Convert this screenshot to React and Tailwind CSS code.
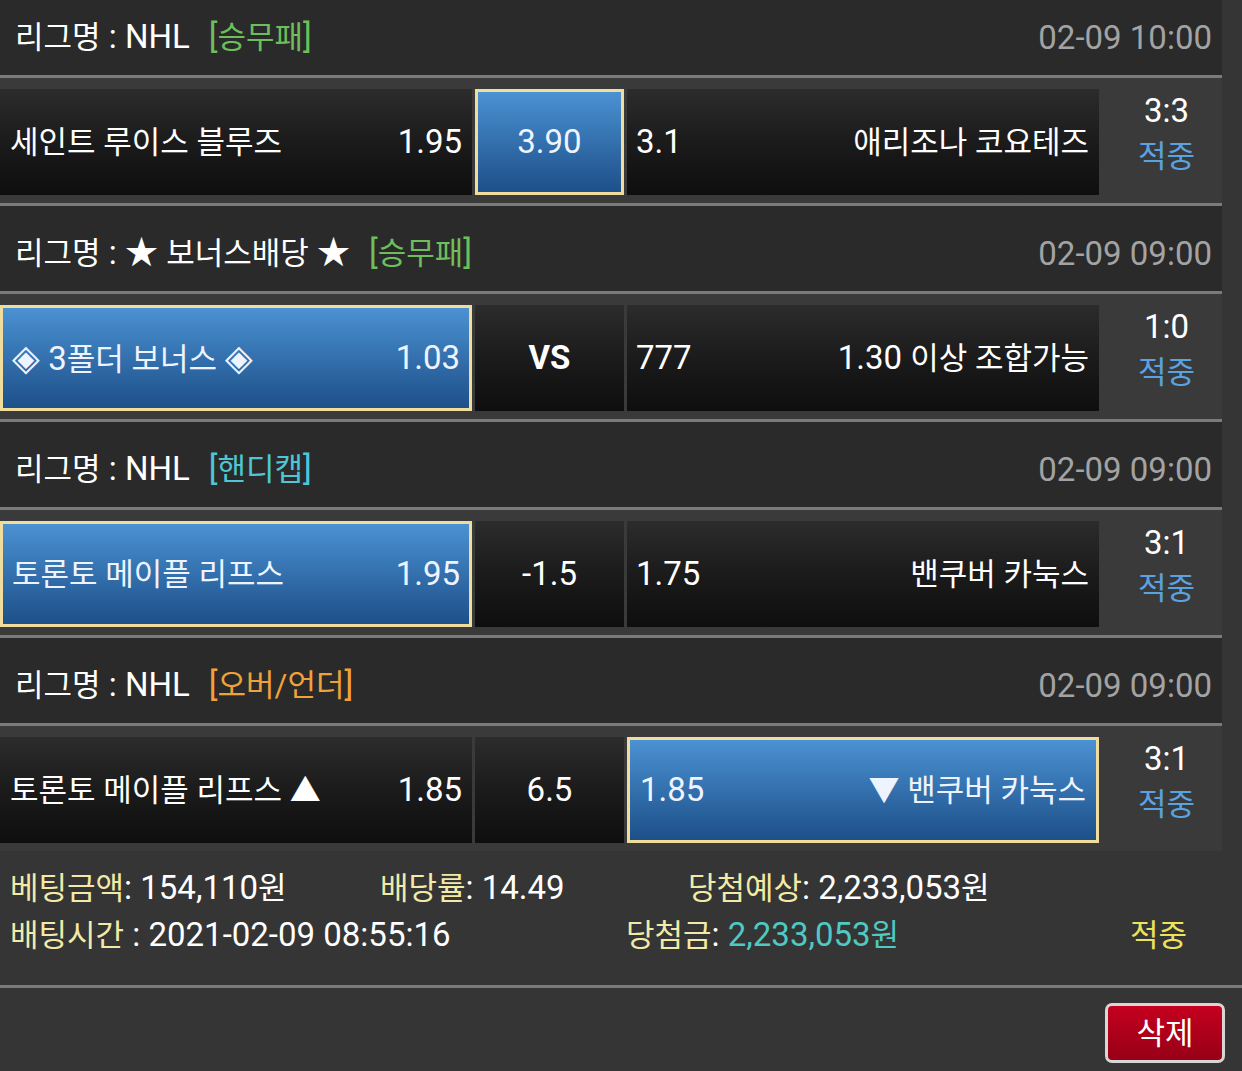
import React from "react";

const K = ({ children, className = "" }) => (
  <span className={"text-[31px] " + className}>{children}</span>
);

function Header({ first, children, tag, tagColor, date }) {
  return (
    <div
      className={
        "flex items-end justify-between bg-[#2a2a2a] border-b-[3px] border-[#7a7a7a] pl-[15px] pr-[10px] pb-[20px] " +
        (first ? "h-[78px]" : "h-[88px]")
      }
    >
      <div className="leading-[34px] text-[33px] text-white whitespace-nowrap">
        {children}
        <span className={"ml-[19px] " + tagColor}>
          [<K>{tag}</K>]
        </span>
      </div>
      <div className="leading-[34px] text-[33px] text-[#a3a3a3]">{date}</div>
    </div>
  );
}

function Cell({ blue, className = "", children }) {
  return (
    <div
      className={
        "h-[106px] flex items-center text-[33px] " +
        (blue
          ? "bg-linear-to-b from-[#4b92d3] to-[#1d5089] border-[3px] border-[#f0dc9c] text-[#eef4ff] "
          : "bg-linear-to-b from-[#2c2c2c] via-[#1b1b1b] to-[#0e0e0e] text-white ") +
        className
      }
    >
      {children}
    </div>
  );
}

function Row({ last, left, center, right, score }) {
  return (
    <div
      className={
        "flex pt-[11px] bg-[#3a3a3a] " +
        (last ? "h-[125px]" : "h-[128px] border-b-[3px] border-[#7a7a7a]")
      }
    >
      <Cell
        blue={left.blue}
        className={"w-[472px] justify-between " + (left.blue ? "pl-[9px] pr-[9px]" : "pl-[10px] pr-[10px]")}
      >
        <span className="whitespace-nowrap">{left.name}</span>
        <span>{left.odds}</span>
      </Cell>
      <Cell blue={center.blue} className="w-[149px] ml-[3px] justify-center">
        <span className={center.bold ? "font-bold" : ""}>{center.text}</span>
      </Cell>
      <Cell
        blue={right.blue}
        className={"w-[472px] ml-[3px] justify-between " + (right.blue ? "pl-[10px] pr-[10px]" : "pl-[9px] pr-[10px]")}
      >
        <span>{right.odds}</span>
        <span className="whitespace-nowrap">{right.name}</span>
      </Cell>
      <div className="flex-1 flex flex-col items-center pl-[12px]">
        <div className="leading-[44px] text-[33px] text-white">{score}</div>
        <div className="leading-[48px] text-[#5aa2e0]">
          <K>적중</K>
        </div>
      </div>
    </div>
  );
}

export default function App() {
  return (
    <div className="w-[1242px] min-h-[1071px] bg-[#353535] font-['Roboto','Noto_Sans_CJK_KR',sans-serif]">
      <div className="w-[1222px]">
        <Header first tag="승무패" tagColor="text-[#6cbf5a]" date="02-09 10:00">
          <K>리그명</K> : NHL
        </Header>
        <Row
          left={{ name: <K>세인트 루이스 블루즈</K>, odds: "1.95" }}
          center={{ blue: true, text: "3.90" }}
          right={{ odds: "3.1", name: <K>애리조나 코요테즈</K> }}
          score="3:3"
        />
        <Header tag="승무패" tagColor="text-[#6cbf5a]" date="02-09 09:00">
          <K>리그명</K> : ★ <K>보너스배당</K> ★
        </Header>
        <Row
          left={{
            blue: true,
            name: (
              <>
                <span className="text-[36px]">◈</span> 3<K>폴더 보너스</K>{" "}
                <span className="text-[36px]">◈</span>
              </>
            ),
            odds: "1.03",
          }}
          center={{ text: "VS", bold: true }}
          right={{
            odds: "777",
            name: (
              <>
                1.30 <K>이상 조합가능</K>
              </>
            ),
          }}
          score="1:0"
        />
        <Header tag="핸디캡" tagColor="text-[#4ec6d6]" date="02-09 09:00">
          <K>리그명</K> : NHL
        </Header>
        <Row
          left={{ blue: true, name: <K>토론토 메이플 리프스</K>, odds: "1.95" }}
          center={{ text: "-1.5" }}
          right={{ odds: "1.75", name: <K>밴쿠버 카눅스</K> }}
          score="3:1"
        />
        <Header tag="오버/언더" tagColor="text-[#f0a23a]" date="02-09 09:00">
          <K>리그명</K> : NHL
        </Header>
        <Row
          last
          left={{ name: <K>토론토 메이플 리프스 ▲</K>, odds: "1.85" }}
          center={{ text: "6.5" }}
          right={{ blue: true, odds: "1.85", name: <K>▼ 밴쿠버 카눅스</K> }}
          score="3:1"
        />
      </div>

      <div className="pt-[14px] pb-[26px] pl-[10px] text-[33px] text-white leading-[46px] border-b-[3px] border-[#7a7a7a]">
        <div className="grid grid-cols-[370px_308px_1fr] whitespace-nowrap">
          <div>
            <K className="text-[#f3eaa8]">베팅금액</K>: 154,110<K>원</K>
          </div>
          <div>
            <K className="text-[#f3eaa8]">배당률</K>: 14.49
          </div>
          <div>
            <K className="text-[#f3eaa8]">당첨예상</K>: 2,233,053<K>원</K>
          </div>
        </div>
        <div className="grid grid-cols-[616px_504px_1fr] whitespace-nowrap">
          <div>
            <K className="text-[#f3eaa8]">배팅시간</K> : 2021-02-09 08:55:16
          </div>
          <div>
            <K className="text-[#f3eaa8]">당첨금</K>:{" "}
            <span className="text-[#4fc9c2]">
              2,233,053<K>원</K>
            </span>
          </div>
          <div className="text-[#ece35a]">
            <K>적중</K>
          </div>
        </div>
      </div>

      <div className="flex justify-end pt-[15px] pr-[17px]">
        <button className="w-[120px] h-[60px] rounded-[7px] border-[3px] border-[#d9d6d6] bg-linear-to-b from-[#c4001e] to-[#980018] text-white flex items-center justify-center">
          <span className="text-[31px] leading-none">삭제</span>
        </button>
      </div>
    </div>
  );
}
